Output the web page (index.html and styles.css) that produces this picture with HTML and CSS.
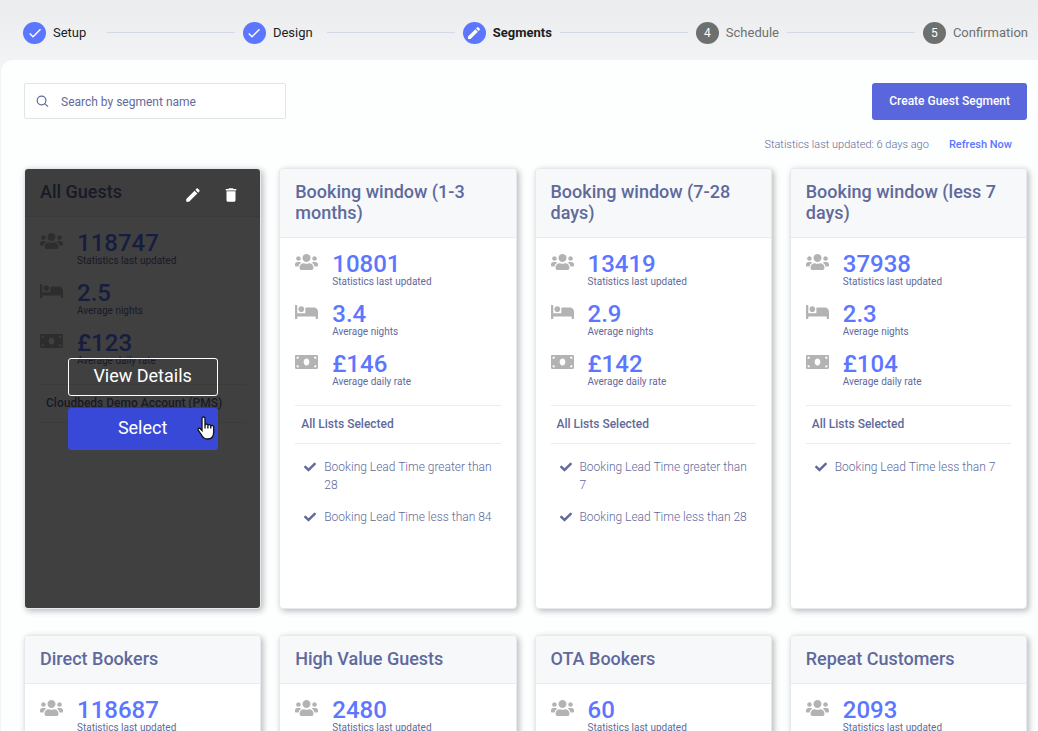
FILE: index.html
```html
<!DOCTYPE html>
<html lang="en">
<head>
<meta charset="utf-8">
<meta name="viewport" content="width=device-width, initial-scale=1">
<title>Segments</title>
<link rel="stylesheet" href="styles.css">
</head>
<body>
<svg class="sprite" aria-hidden="true">
  <symbol id="users" viewBox="0 0 640 512"><path d="M96 224c35.3 0 64-28.7 64-64s-28.7-64-64-64-64 28.7-64 64 28.7 64 64 64zm448 0c35.3 0 64-28.7 64-64s-28.7-64-64-64-64 28.7-64 64 28.7 64 64 64zm32 32h-64c-17.6 0-33.5 7.1-45.1 18.6 40.3 22.1 68.9 62 75.1 109.4h66c17.7 0 32-14.3 32-32v-32c0-35.3-28.7-64-64-64zm-256 0c61.9 0 112-50.1 112-112S381.900 32 320 32 208 82.100 208 144s50.100 112 112 112zm76.800 32h-8.300c-20.800 10-43.900 16-68.500 16s-47.600-6-68.500-16h-8.300C179.600 288 128 339.600 128 403.200V432c0 26.500 21.500 48 48 48h288c26.500 0 48-21.500 48-48v-28.800c0-63.600-51.600-115.200-115.200-115.200zm-223.700-13.400C161.500 263.100 145.600 256 128 256H64c-35.300 0-64 28.700-64 64v32c0 17.700 14.300 32 32 32h65.900c6.300-47.400 34.900-87.300 75.200-109.400z"/></symbol>
  <symbol id="bed" viewBox="0 0 640 512"><path d="M176 256c44.110 0 80-35.890 80-80s-35.890-80-80-80-80 35.890-80 80 35.890 80 80 80zm352-128H304c-8.840 0-16 7.160-16 16v144H64V80c0-8.840-7.160-16-16-16H16C7.160 64 0 71.160 0 80v352c0 8.840 7.160 16 16 16h32c8.840 0 16-7.160 16-16v-48h512v48c0 8.840 7.160 16 16 16h32c8.840 0 16-7.160 16-16V240c0-61.860-50.140-112-112-112z"/></symbol>
  <symbol id="bill" viewBox="0 0 640 512"><path d="M608 64H32C14.330 64 0 78.330 0 96v320c0 17.670 14.330 32 32 32h576c17.670 0 32-14.330 32-32V96c0-17.670-14.330-32-32-32zM48 400v-64c35.350 0 64 28.650 64 64H48zm0-224v-64h64c0 35.350-28.650 64-64 64zm272 176c-44.190 0-80-42.990-80-96 0-53.020 35.820-96 80-96s80 42.980 80 96c0 53.030-35.830 96-80 96zm272 48h-64c0-35.350 28.650-64 64-64v64zm0-224c-35.350 0-64-28.650-64-64h64v64z"/></symbol>
  <symbol id="check" viewBox="0 0 512 512"><path d="M173.898 439.404l-166.400-166.400c-9.997-9.997-9.997-26.206 0-36.204l36.203-36.204c9.997-9.998 26.207-9.998 36.204 0L192 312.690 432.095 72.596c9.997-9.997 26.207-9.997 36.204 0l36.203 36.204c9.997 9.997 9.997 26.206 0 36.204l-294.400 294.401c-9.998 9.997-26.207 9.997-36.204-.001z"/></symbol>
  <symbol id="done" viewBox="0 0 24 24"><path d="M9 16.170L4.830 12l-1.420 1.410L9 19 21 7l-1.410-1.410z"/></symbol>
  <symbol id="edit" viewBox="0 0 24 24"><path d="M3 17.250V21h3.750L17.810 9.940l-3.750-3.750L3 17.250zM20.710 7.040c.39-.39.39-1.020 0-1.410l-2.340-2.340c-.39-.39-1.020-.39-1.410 0l-1.830 1.830 3.750 3.750 1.830-1.830z"/></symbol>
  <symbol id="trash" viewBox="0 0 24 24"><path d="M6 19c0 1.100.9 2 2 2h8c1.100 0 2-.9 2-2V7H6v12zM19 4h-3.500l-1-1h-5l-1 1H5v2h14V4z"/></symbol>
</svg>

<div class="app">
  <ol class="steps">
    <li class="step"><span class="dot"><svg><use href="#done"/></svg></span>Setup</li>
    <li class="rail"></li>
    <li class="step"><span class="dot"><svg><use href="#done"/></svg></span>Design</li>
    <li class="rail"></li>
    <li class="step current" aria-current="step"><span class="dot"><svg><use href="#edit"/></svg></span>Segments</li>
    <li class="rail"></li>
    <li class="step todo"><span class="dot">4</span>Schedule</li>
    <li class="rail"></li>
    <li class="step todo"><span class="dot">5</span>Confirmation</li>
  </ol>

  <main class="panel">
    <div class="toolbar">
      <label class="search">
        <svg viewBox="0 0 14 14" aria-hidden="true"><circle cx="6" cy="6" r="4.700"/><path d="M9.300 9.300L13 12.500"/></svg>
        <input type="search" placeholder="Search by segment name" aria-label="Search by segment name">
      </label>
      <button class="create" type="button">Create Guest Segment</button>
    </div>
    <div class="refresh">
      <span>Statistics last updated: 6 days ago</span>
      <a href="#">Refresh Now</a>
    </div>

    <div class="cards">
      <article class="card">
        <header><h2>All Guests</h2></header>
        <div class="body">
          <dl class="stats">
            <div><svg><use href="#users"/></svg><dd>118747</dd><dt>Statistics last updated</dt></div>
            <div><svg><use href="#bed"/></svg><dd>2.5</dd><dt>Average nights</dt></div>
            <div><svg><use href="#bill"/></svg><dd>£123</dd><dt>Average daily rate</dt></div>
          </dl>
          <h3>Cloudbeds Demo Account (PMS)</h3>
        </div>
        <div class="overlay">
          <div class="tools">
            <button type="button" aria-label="Edit"><svg><use href="#edit"/></svg></button>
            <button type="button" aria-label="Delete"><svg><use href="#trash"/></svg></button>
          </div>
          <div class="choices">
            <button class="details" type="button">View Details</button>
            <button class="select" type="button">Select
              <svg class="pointer" viewBox="0 0 18 24" aria-hidden="true"><path d="M5 2.500C5 .5 8 .5 8 2.500V9c.3-1.400 2.900-1.200 2.900.4.500-1.300 2.900-1 2.900.7.700-1.100 2.900-.8 2.900 1.100V16c0 4-2.200 7-6.200 7-3.500 0-4.800-1.500-6-4L1.200 14.200c-.8-1.800 1-2.700 2.200-1.500L5 14.500z"/><path d="M8 9v3.500M10.900 9.500v3M13.800 10.500v2"/></svg>
            </button>
          </div>
        </div>
      </article>

      <article class="card">
        <header><h2>Booking window (1-3 months)</h2></header>
        <div class="body">
          <dl class="stats">
            <div><svg><use href="#users"/></svg><dd>10801</dd><dt>Statistics last updated</dt></div>
            <div><svg><use href="#bed"/></svg><dd>3.4</dd><dt>Average nights</dt></div>
            <div><svg><use href="#bill"/></svg><dd>£146</dd><dt>Average daily rate</dt></div>
          </dl>
          <h3>All Lists Selected</h3>
          <ul class="rules">
            <li><svg><use href="#check"/></svg>Booking Lead Time greater than 28</li>
            <li><svg><use href="#check"/></svg>Booking Lead Time less than 84</li>
          </ul>
        </div>
      </article>

      <article class="card">
        <header><h2>Booking window (7-28 days)</h2></header>
        <div class="body">
          <dl class="stats">
            <div><svg><use href="#users"/></svg><dd>13419</dd><dt>Statistics last updated</dt></div>
            <div><svg><use href="#bed"/></svg><dd>2.9</dd><dt>Average nights</dt></div>
            <div><svg><use href="#bill"/></svg><dd>£142</dd><dt>Average daily rate</dt></div>
          </dl>
          <h3>All Lists Selected</h3>
          <ul class="rules">
            <li><svg><use href="#check"/></svg>Booking Lead Time greater than 7</li>
            <li><svg><use href="#check"/></svg>Booking Lead Time less than 28</li>
          </ul>
        </div>
      </article>

      <article class="card">
        <header><h2>Booking window (less 7 days)</h2></header>
        <div class="body">
          <dl class="stats">
            <div><svg><use href="#users"/></svg><dd>37938</dd><dt>Statistics last updated</dt></div>
            <div><svg><use href="#bed"/></svg><dd>2.3</dd><dt>Average nights</dt></div>
            <div><svg><use href="#bill"/></svg><dd>£104</dd><dt>Average daily rate</dt></div>
          </dl>
          <h3>All Lists Selected</h3>
          <ul class="rules">
            <li><svg><use href="#check"/></svg>Booking Lead Time less than 7</li>
          </ul>
        </div>
      </article>

      <article class="card">
        <header><h2>Direct Bookers</h2></header>
        <div class="body"><dl class="stats"><div><svg><use href="#users"/></svg><dd>118687</dd><dt>Statistics last updated</dt></div></dl></div>
      </article>
      <article class="card">
        <header><h2>High Value Guests</h2></header>
        <div class="body"><dl class="stats"><div><svg><use href="#users"/></svg><dd>2480</dd><dt>Statistics last updated</dt></div></dl></div>
      </article>
      <article class="card">
        <header><h2>OTA Bookers</h2></header>
        <div class="body"><dl class="stats"><div><svg><use href="#users"/></svg><dd>60</dd><dt>Statistics last updated</dt></div></dl></div>
      </article>
      <article class="card">
        <header><h2>Repeat Customers</h2></header>
        <div class="body"><dl class="stats"><div><svg><use href="#users"/></svg><dd>2093</dd><dt>Statistics last updated</dt></div></dl></div>
      </article>
    </div>
  </main>
</div>
</body>
</html>
```
FILE: styles.css
```css
* { box-sizing: border-box; }

body, h2, h3, ol, ul, dl, dd { margin: 0; padding: 0; }

body {
  font-family: Roboto, "Liberation Sans", sans-serif;
  font-size: 13px;
  color: #5f6a9b;
}

button, input { font-family: inherit; }
button { cursor: pointer; }
svg { display: block; fill: currentColor; }

.sprite { position: absolute; width: 0; height: 0; }

.app {
  height: 100vh;
  overflow: hidden;
  background: linear-gradient(#ebecee, #f2f3f5 60px);
}

/* Progress steps */
.steps {
  display: flex;
  align-items: center;
  gap: 8px;
  height: 60px;
  padding: 6px 10px 0 23px;
  list-style: none;
}

.step {
  display: flex;
  align-items: center;
  gap: 7px;
  min-width: 76px;
  line-height: 16px;
  color: #1c1d21;
}

.dot {
  display: flex;
  align-items: center;
  justify-content: center;
  width: 23px;
  height: 22px;
  border-radius: 50%;
  background: #5c76ff;
  color: #fff;
}

.dot svg { width: 16px; height: 16px; }
.current { font-weight: 700; }
.todo { color: #6e706f; }
.todo .dot { background: #6e706f; font-size: 12px; }

.rail { flex: 1; height: 1px; margin-bottom: 2px; background: #d3d9e8; }

/* Main panel */
.panel {
  min-height: 100%;
  margin-left: 1px;
  padding: 23px 11px 28px 23px;
  border-top-left-radius: 12px;
  background: #fdfefe;
}

.toolbar {
  display: flex;
  justify-content: space-between;
  align-items: flex-start;
}

.search {
  display: flex;
  align-items: center;
  gap: 12px;
  width: 262px;
  height: 36px;
  padding: 0 11px;
  border: 1px solid #e1e5ea;
  border-radius: 2px;
  background: #fff;
}

.search svg {
  flex: none;
  width: 13px;
  height: 13px;
  fill: none;
  stroke: #5f6a9b;
  stroke-width: 1.3;
}

.search input {
  flex: 1;
  min-width: 0;
  padding: 2px 0 0;
  border: 0;
  outline: 0;
  background: none;
  font-size: 12px;
  color: #5f6a9b;
}

.search input::placeholder { color: #5f6a9b; opacity: 1; }

.create {
  height: 37px;
  padding: 0 17px 2px;
  border: 0;
  border-radius: 3px;
  background: #5a67dc;
  color: #fff;
  font-size: 12px;
  font-weight: 500;
}

.refresh {
  display: flex;
  justify-content: flex-end;
  gap: 20px;
  padding: 17px 15px 0 0;
  font-size: 11px;
  line-height: 16px;
  font-weight: 300;
}

.refresh a { color: #5c76ff; font-weight: 500; text-decoration: none; }

/* Segment cards */
.cards {
  display: grid;
  grid-template-columns: repeat(4, 1fr);
  grid-auto-rows: minmax(441px, auto);
  gap: 26px 18px;
  padding-top: 15px;
}

.card {
  position: relative;
  border: 1px solid #e6e8f0;
  border-radius: 4px;
  background: #fff;
  box-shadow: 2px 2px 6px rgba(0, 0, 0, 0.28);
}

.card header {
  padding: 12px 15px 14px;
  border-bottom: 1px solid #e9ebf1;
  border-radius: 3px 3px 0 0;
  background: #f7f8fa;
}

.card h2 { font-size: 18px; line-height: 21px; font-weight: 500; }

.body { padding: 14px 15px; }

.stats { display: grid; gap: 14px; }

.stats div {
  display: grid;
  grid-template-columns: 23px 1fr;
  column-gap: 14px;
}

.stats svg { width: 23px; height: 20px; color: #b3b3b3; }

.stats dd {
  font-size: 24px;
  line-height: 24px;
  font-weight: 500;
  color: #5c76ff;
}

.stats dt { grid-column: 2; font-size: 10px; line-height: 12px; }

.card h3 {
  margin-top: 17px;
  padding: 9px 6px 10px;
  border: solid #ececee;
  border-width: 1px 0;
  font-size: 12px;
  line-height: 18px;
  font-weight: 500;
}

.rules {
  display: grid;
  gap: 14px;
  padding: 14px 0 0 9px;
  list-style: none;
  font-size: 12px;
  line-height: 18px;
  font-weight: 300;
}

.rules li { display: flex; gap: 8px; }
.rules svg { flex: none; width: 12px; height: 18px; }

/* Hover overlay */
.overlay {
  position: absolute;
  inset: 0;
  display: flex;
  flex-direction: column;
  border-radius: 3px;
  background: rgba(0, 0, 0, 0.75);
}

.tools {
  display: flex;
  justify-content: flex-end;
  gap: 20px;
  padding: 17px 20px 0;
}

.tools button {
  padding: 0;
  border: 0;
  background: none;
  color: #fff;
}

.tools svg { width: 18px; height: 18px; }

.choices {
  flex: 1;
  display: flex;
  flex-direction: column;
  align-items: center;
  justify-content: center;
  gap: 12px;
  padding-bottom: 5px;
}

.choices button {
  width: 150px;
  padding: 0 6px 2px;
  border-radius: 3px;
  color: #fff;
  font-size: 18px;
}

.details { height: 38px; border: 1px solid #fff; background: none; }

.select {
  position: relative;
  height: 42px;
  border: 0;
  background: #3849d8;
}

.pointer {
  position: absolute;
  right: 3px;
  top: 8px;
  width: 18px;
  height: 24px;
  fill: #fff;
  stroke: #111;
  stroke-width: 1.3;
}
```
